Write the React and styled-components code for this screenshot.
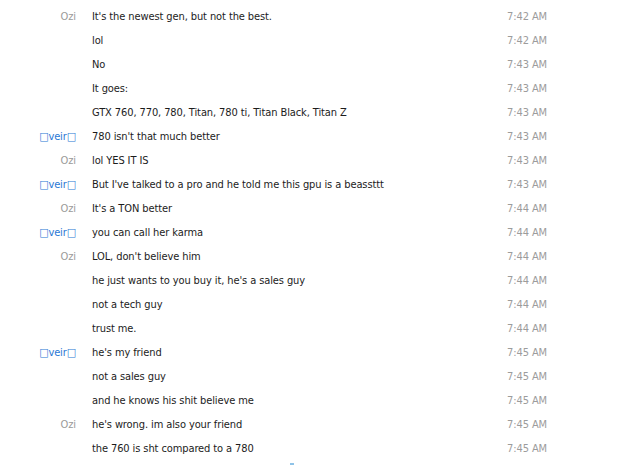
import styled, { createGlobalStyle } from "styled-components";

const messages = [
  { from: "Ozi", text: "It's the newest gen, but not the best.", time: "7:42 AM" },
  { text: "lol", time: "7:42 AM" },
  { text: "No", time: "7:43 AM" },
  { text: "It goes:", time: "7:43 AM" },
  { text: "GTX 760, 770, 780, Titan, 780 ti, Titan Black, Titan Z", time: "7:43 AM" },
  { from: "\u25A1veir\u25A1", me: true, text: "780 isn't that much better", time: "7:43 AM" },
  { from: "Ozi", text: "lol YES IT IS", time: "7:43 AM" },
  { from: "\u25A1veir\u25A1", me: true, text: "But I've talked to a pro and he told me this gpu is a beassttt", time: "7:43 AM" },
  { from: "Ozi", text: "It's a TON better", time: "7:44 AM" },
  { from: "\u25A1veir\u25A1", me: true, text: "you can call her karma", time: "7:44 AM" },
  { from: "Ozi", text: "LOL, don't believe him", time: "7:44 AM" },
  { text: "he just wants to you buy it, he's a sales guy", time: "7:44 AM" },
  { text: "not a tech guy", time: "7:44 AM" },
  { text: "trust me.", time: "7:44 AM" },
  { from: "\u25A1veir\u25A1", me: true, text: "he's my friend", time: "7:45 AM" },
  { text: "not a sales guy", time: "7:45 AM" },
  { text: "and he knows his shit believe me", time: "7:45 AM" },
  { from: "Ozi", text: "he's wrong. im also your friend", time: "7:45 AM" },
  { text: "the 760 is sht compared to a 780", time: "7:45 AM" },
];

export default function App() {
  return (
    <>
      <Global />
      <Log>
        {messages.map((m, i) => (
          <Row key={i}>
            <Name $me={m.me}>{m.from || ""}</Name>
            <Text>{m.text}</Text>
            <Time>{m.time}</Time>
          </Row>
        ))}
        <Loader />
      </Log>
    </>
  );
}

const Global = createGlobalStyle`
  body {
    margin: 0;
    background: #ffffff;
    font-family: "DejaVu Sans", sans-serif;
  }
`;

const Log = styled.div`
  position: relative;
  width: 625px;
  height: 465px;
  overflow: hidden;
  padding-top: 5px;
  box-sizing: border-box;
  font-family: "DejaVu Sans", "Liberation Sans", sans-serif;
  font-stretch: condensed;
  font-size: 11px;
  letter-spacing: -0.1px;
`;

const Row = styled.div`
  display: grid;
  grid-template-columns: 76px 384px 55px;
  column-gap: 16px;
  height: 24px;
  line-height: 24px;
`;

const Name = styled.div`
  text-align: right;
  color: ${(p) => (p.$me ? "#2b78d4" : "#9a9a9a")};
  white-space: nowrap;
`;

const Text = styled.div`
  color: #1c1c1c;
  white-space: nowrap;
`;

const Time = styled.div`
  text-align: right;
  color: #9c9c9c;
  white-space: nowrap;
`;

const Loader = styled.div`
  position: absolute;
  left: 290px;
  bottom: 0;
  width: 4px;
  height: 2px;
  background: #8fc3e8;
`;
